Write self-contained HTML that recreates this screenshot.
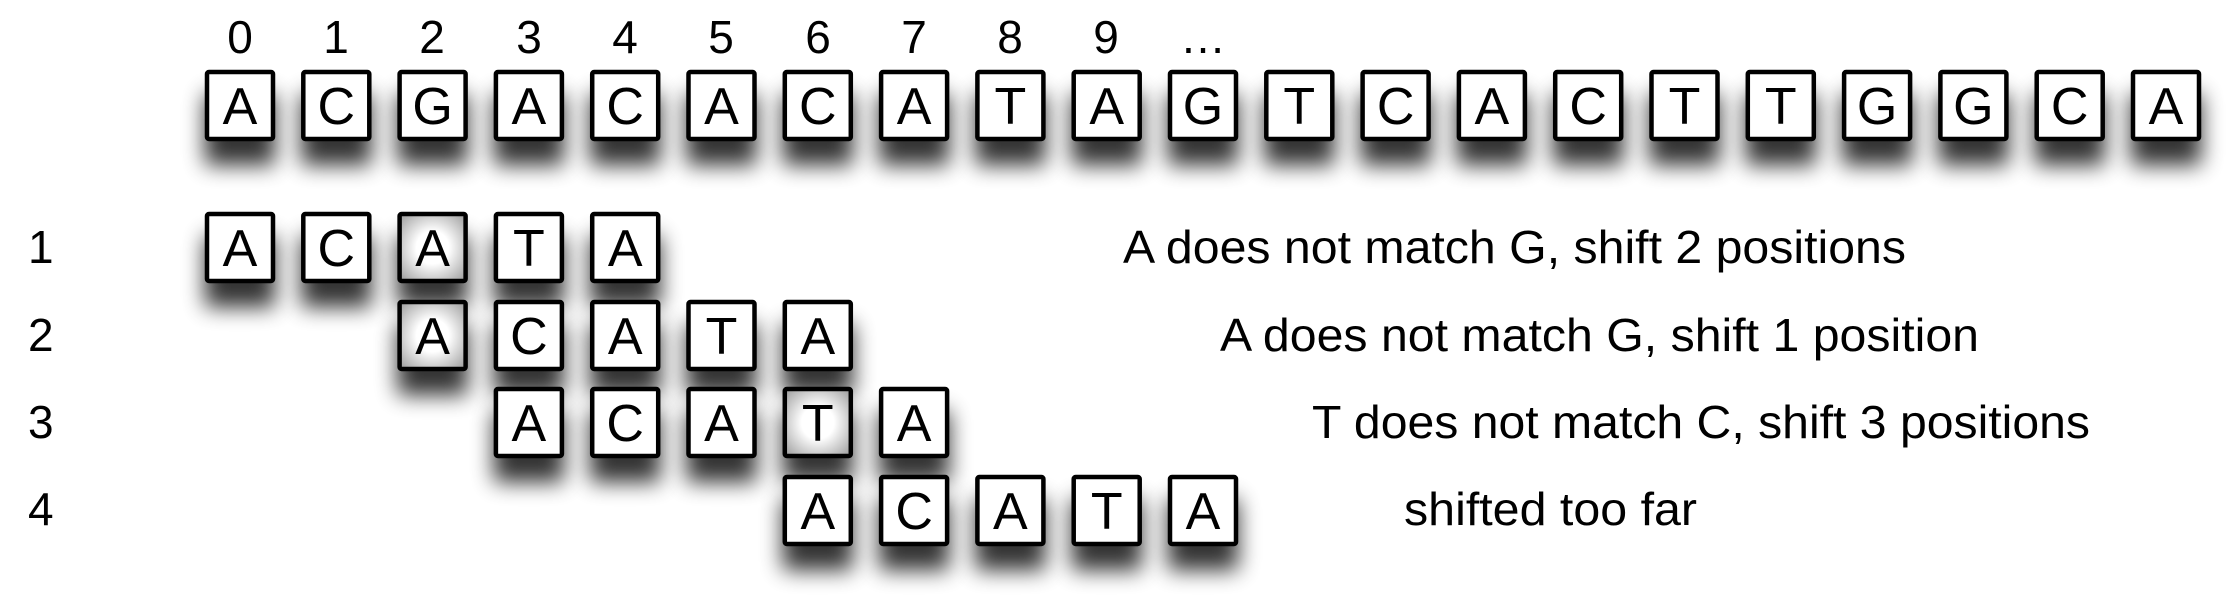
<!DOCTYPE html>
<html><head><style>
html,body{margin:0;padding:0;background:#fff;}
svg{display:block}
text{font-family:"Liberation Sans",sans-serif;fill:#000}
</style></head><body>
<svg width="2233" height="604" viewBox="0 0 2233 604" xmlns="http://www.w3.org/2000/svg">
<defs>
<filter id="sh" x="-40%" y="-40%" width="180%" height="220%">
<feGaussianBlur in="SourceAlpha" stdDeviation="11"/>
<feOffset dx="0" dy="24" result="b"/>
<feComponentTransfer><feFuncA type="linear" slope="0.8"/></feComponentTransfer>
<feMerge><feMergeNode/><feMergeNode in="SourceGraphic"/></feMerge>
</filter>
<radialGradient id="hl" cx="50%" cy="50%" r="70%">
<stop offset="0.35" stop-color="#fff"/><stop offset="1" stop-color="#9a9a9a"/>
</radialGradient>
<g id="bx"><rect x="2" y="2" width="66" height="67" rx="2" fill="#fff" stroke="#000" stroke-width="4.5"/></g>
<g id="bh"><rect x="2" y="2" width="66" height="67" rx="2" fill="url(#hl)" stroke="#000" stroke-width="4.5"/></g>
</defs>
<g font-size="46" text-anchor="middle">
<text x="240" y="53">0</text><text x="336" y="53">1</text><text x="432" y="53">2</text><text x="529" y="53">3</text><text x="625" y="53">4</text><text x="721" y="53">5</text><text x="818" y="53">6</text><text x="914" y="53">7</text><text x="1010" y="53">8</text><text x="1106" y="53">9</text><text x="1203" y="53">…</text>
</g>
<g font-size="46">
<text x="28" y="263">1</text><text x="28" y="351">2</text><text x="28" y="438">3</text><text x="28" y="525">4</text>
<text x="1123" y="263" textLength="783" lengthAdjust="spacingAndGlyphs">A does not match G, shift 2 positions</text>
<text x="1220" y="351" textLength="759" lengthAdjust="spacingAndGlyphs">A does not match G, shift 1 position</text>
<text x="1312" y="438" textLength="778" lengthAdjust="spacingAndGlyphs">T does not match C, shift 3 positions</text>
<text x="1404" y="525" textLength="293" lengthAdjust="spacingAndGlyphs">shifted too far</text>
</g>
<g id="rows" font-size="52" text-anchor="middle"></g>
<script>
var ns="http://www.w3.org/2000/svg",g=document.getElementById('rows');
function box(col,y,ch,h){var x=205+col*96.3;var gg=document.createElementNS(ns,'g');gg.setAttribute('filter','url(#sh)');
var u=document.createElementNS(ns,'use');u.setAttribute('href',h?'#bh':'#bx');u.setAttribute('x',x);u.setAttribute('y',y);gg.appendChild(u);
var t=document.createElementNS(ns,'text');t.setAttribute('x',x+35);t.setAttribute('y',y+54);t.textContent=ch;gg.appendChild(t);g.appendChild(gg);}
"ACGACACATAGTCACTTGGCA".split('').forEach(function(c,i){box(i,70,c,false)});
var p="ACATA".split('');
p.forEach(function(c,i){box(i,212,c,i==2)});
p.forEach(function(c,i){box(i+2,300,c,i==0)});
p.forEach(function(c,i){box(i+3,387,c,i==3)});
p.forEach(function(c,i){box(i+6,475,c,false)});
</script>
</svg>
</body></html>
